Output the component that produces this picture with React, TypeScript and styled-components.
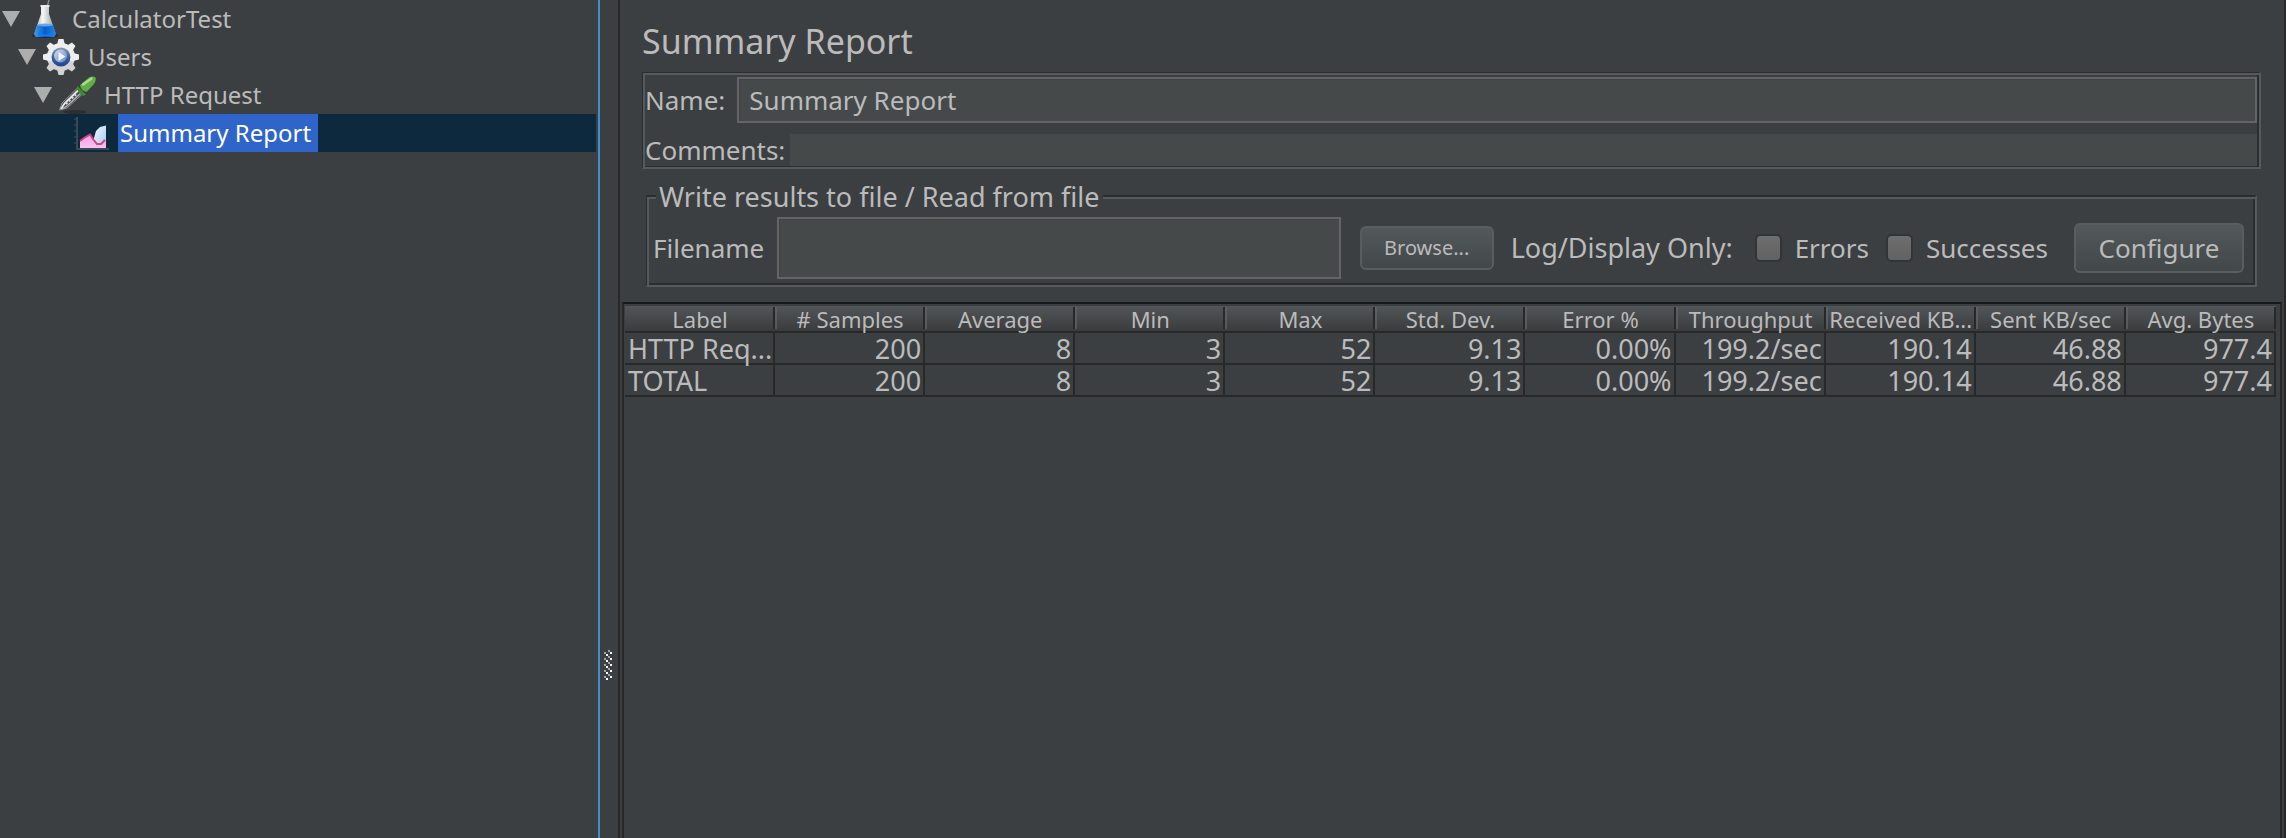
import React from 'react';
import styled, { createGlobalStyle } from 'styled-components';

const color = {
  bg: '#3c3f41',
  field: '#45494a',
  fieldBorder: '#646464',
  text: '#bbbbbb',
  etchDark: '#2b2d2f',
  etchLight: '#555a5c',
  line: '#282828',
  focus: '#3d8fd1',
};

const GlobalStyle = createGlobalStyle`
  * { box-sizing: border-box; }
  body { margin: 0; background: ${color.bg}; }
  body, input, button {
    font-family: "Noto Sans", "Liberation Sans", sans-serif;
    color: ${color.text};
  }
`;

const Window = styled.div`
  display: flex;
  min-height: 100vh;
  background: ${color.bg};
  font-size: 26px;
  line-height: 32px;
`;

const TreePane = styled.nav`
  flex: none;
  width: 600px;
  padding-right: 2px;
  border-right: 2px solid ${color.focus};
`;

const Tree = styled.ul`
  margin: 0;
  padding: 0;
  list-style: none;
`;

const TreeRow = styled.li<{ $depth: number; $selected?: boolean }>`
  display: flex;
  align-items: center;
  height: 38px;
  padding-left: ${(p) => 2 + p.$depth * 16}px;
  background: ${(p) => (p.$selected ? '#0d293e' : 'transparent')};
`;

const ArrowSlot = styled.span`
  display: flex;
  width: 24px;
`;

const TreeIcon = styled.svg`
  flex: none;
  width: 38px;
  height: 38px;
`;

const TreeLabel = styled.span<{ $selected?: boolean }>`
  margin-left: 6px;
  padding: 0 7px 0 2px;
  font-size: 24px;
  line-height: 38px;
  color: ${(p) => (p.$selected ? '#ffffff' : color.text)};
  background: ${(p) => (p.$selected ? '#2f65ca' : 'transparent')};
`;

const Splitter = styled.div`
  flex: none;
  width: 18px;
  padding: 650px 0 0 4px;
`;

const Grip = styled.svg`
  display: block;
`;

const Main = styled.main`
  flex: 1;
  min-width: 0;
  display: flex;
  flex-direction: column;
  border: solid ${color.line};
  border-width: 0 2px;
`;

const Title = styled.h1`
  margin: 21px 22px 11px;
  font-size: 34px;
  line-height: 40px;
  font-weight: 400;
`;

const NameBox = styled.section`
  display: flex;
  flex-direction: column;
  gap: 11px;
  margin: 0 23px 10px 22px;
  padding: 4px 2px 1px;
  border: solid ${color.etchDark};
  border-width: 1px 2px 2px 1px;
  border-right-color: ${color.etchLight};
  border-bottom-color: ${color.etchLight};
  box-shadow: inset 2px 2px 0 ${color.etchLight}, inset -2px -1px 0 ${color.etchDark};
`;

const FieldRow = styled.div<{ $gap: number }>`
  display: flex;
  align-items: center;
  gap: ${(p) => p.$gap}px;
`;

const TextField = styled.input<{ $height: number }>`
  flex: 1;
  min-width: 0;
  height: ${(p) => p.$height}px;
  padding: 0 10px;
  font-size: 26px;
  line-height: 32px;
  background: ${color.field};
  border: 2px solid ${color.fieldBorder};
  border-radius: 0;
  outline: none;
  box-shadow: inset 1px 1px 0 #3f4143;
`;

const PlainField = styled(TextField)`
  border: none;
  box-shadow: none;
`;

const FileBox = styled.fieldset`
  min-width: 0;
  margin: 0 27px 15px 26px;
  padding: 4px 11px 6px 6px;
  border: solid ${color.etchDark};
  border-width: 2px 2px 2px 1px;
  border-right-color: ${color.etchLight};
  border-bottom-color: ${color.etchLight};
  box-shadow: inset 2px 2px 0 ${color.etchLight}, inset -2px -2px 0 ${color.etchDark};
`;

const Legend = styled.legend`
  margin-left: 3px;
  padding: 2px 4px 0 3px;
  font-size: 27px;
  background: ${color.bg};
`;

const FileRow = styled.div`
  display: flex;
  align-items: center;
  white-space: nowrap;
`;

const FileLabel = styled.label`
  margin-right: 13px;
`;

const Button = styled.button<{ $small?: boolean }>`
  flex: none;
  height: ${(p) => (p.$small ? 44 : 50)}px;
  width: ${(p) => (p.$small ? 134 : 170)}px;
  margin-left: ${(p) => (p.$small ? 19 : 0)}px;
  padding: 0;
  font-size: ${(p) => (p.$small ? 20 : 26)}px;
  line-height: 32px;
  border: 2px solid #5a5d5e;
  border-radius: 6px;
  background: linear-gradient(#53585a, #42484a);
`;

const FilterGroup = styled.div`
  display: flex;
  align-items: center;
  padding: 0 26px 0 17px;
`;

const FilterTitle = styled.span`
  width: 244px;
  font-size: 27px;
`;

const CheckLabel = styled.label`
  display: flex;
  align-items: center;
  gap: 13px;

  & + & {
    margin-left: 17px;
  }
`;

const Check = styled.input`
  appearance: none;
  width: 27px;
  height: 28px;
  margin: 0;
  border: 2px solid #323435;
  border-radius: 5px;
  background: linear-gradient(#6e6e6e, #626262) padding-box;
`;

const TablePane = styled.section`
  flex: 1;
  margin: 0 2px;
  padding: 2px 4px 0 1px;
  border: solid ${color.line};
  border-width: 2px 2px 0;
  border-top-color: #17191a;
`;

const Table = styled.table`
  width: 100%;
  table-layout: fixed;
  border-collapse: separate;
  border-spacing: 0;
`;

const HeadCell = styled.th`
  height: 27px;
  padding: 1px 0 0;
  white-space: nowrap;
  font-size: 22px;
  line-height: 24px;
  font-weight: 400;
  text-align: center;
  border-bottom: 2px solid ${color.line};
  background:
    linear-gradient(${color.line}, ${color.line}) right 0 top 1px / 2px 22px no-repeat,
    linear-gradient(#5e6163, #55585a) left 0 top 1px / 2px 22px no-repeat,
    linear-gradient(#535658, #393b3d);

  &:first-child {
    background:
      linear-gradient(${color.line}, ${color.line}) right 0 top 1px / 2px 22px no-repeat,
      linear-gradient(#535658, #393b3d);
  }
`;

const Cell = styled.td<{ $text?: boolean }>`
  height: 32px;
  padding: ${(p) => (p.$text ? '2px 0 0 3px' : '2px 2px 0 0')};
  white-space: nowrap;
  font-size: 27px;
  line-height: 28px;
  text-align: ${(p) => (p.$text ? 'left' : 'right')};
  border: solid ${color.line};
  border-width: 0 2px 2px 0;
`;

const Arrow = () => (
  <svg width="18" height="16" viewBox="0 0 18 16" aria-hidden="true">
    <path d="M0 0H18L9 16Z" fill="#adadad" />
  </svg>
);

const FlaskIcon = () => (
  <TreeIcon viewBox="0 0 38 38" aria-hidden="true">
    <defs>
      <linearGradient id="glass" x1="0" x2="1" y1="0" y2="0">
        <stop offset="0" stopColor="#9fa4a8" />
        <stop offset=".4" stopColor="#f6f7f8" />
        <stop offset=".65" stopColor="#c9cdd0" />
        <stop offset="1" stopColor="#8b9094" />
      </linearGradient>
      <linearGradient id="liquid" x1="0" x2="1" y1="0" y2="0">
        <stop offset="0" stopColor="#3b9bf2" />
        <stop offset=".5" stopColor="#0a5cc4" />
        <stop offset="1" stopColor="#1e86ee" />
      </linearGradient>
    </defs>
    <ellipse cx="19" cy="35.500" rx="13" ry="2.500" fill="#26292b" />
    <path d="M21 7L23 0" stroke="#85898b" strokeWidth="1.500" />
    <path d="M15 6H23V14L29.500 33Q30 37 26 37H12Q8 37 8.500 33L15 14Z" fill="url(#glass)" />
    <path d="M11 25H27L29.500 33Q30 37 26 37H12Q8 37 8.500 33Z" fill="url(#liquid)" />
    <path d="M12 33Q19 36 27 33L26 36H12Z" fill="#0a7dff" />
    <ellipse cx="19" cy="25" rx="8" ry="1.500" fill="#5fa9ea" />
    <path d="M14.500 6H23.500" stroke="#e9ebec" strokeWidth="2" />
  </TreeIcon>
);

const GearIcon = () => (
  <TreeIcon viewBox="0 0 38 38" aria-hidden="true">
    <defs>
      <linearGradient id="gear" x1="0" x2="0" y1="0" y2="1">
        <stop offset="0" stopColor="#f4f4f4" />
        <stop offset="1" stopColor="#cccccc" />
      </linearGradient>
      <linearGradient id="hub" x1="0" x2="0" y1="0" y2="1">
        <stop offset="0" stopColor="#8c9cb8" />
        <stop offset=".5" stopColor="#3d619f" />
        <stop offset="1" stopColor="#1c4490" />
      </linearGradient>
      <linearGradient id="hubFace" x1="0" x2="1" y1="0" y2="1">
        <stop offset="0" stopColor="#d5deed" />
        <stop offset="1" stopColor="#5f88cc" />
      </linearGradient>
    </defs>
    <circle cx="19" cy="19" r="14" fill="url(#gear)" />
    {[0, 45, 90, 135, 180, 225, 270, 315].map((angle) => (
      <path
        key={angle}
        transform={`rotate(${angle} 19 19)`}
        d="M16.500 1H21.500L23 7V11H15V7Z"
        fill={angle > 90 && angle < 270 ? '#d2d2d2' : '#eeeeee'}
      />
    ))}
    <circle cx="19" cy="19" r="9.500" fill="url(#hub)" />
    <circle cx="18.500" cy="18" r="6.500" fill="url(#hubFace)" />
    <path d="M16.500 14L23.500 18.500L16.500 23Z" fill="#f1f4fa" />
  </TreeIcon>
);

const PipetteIcon = () => (
  <TreeIcon viewBox="0 0 38 38" aria-hidden="true">
    <ellipse cx="17" cy="36" rx="12" ry="2" fill="#2c2f30" />
    <path d="M1.500 34L4 27L19.500 12L25 17.500L9 32Z" fill="#4b4e4f" stroke="#8d9091" strokeWidth="1" />
    <path d="M3 33L6.500 27.500L20 14.500" fill="none" stroke="#e9ebeb" strokeWidth="1.800" />
    <path d="M4 33L9 30L23 17" fill="none" stroke="#b7b9b9" strokeWidth="1.200" />
    <path d="M8 28L18 18.500" stroke="#d8dada" strokeWidth="2" strokeDasharray="2 2" />
    <path d="M19 9.500L28 18.500L25.500 20Q19.500 17 19 11Z" fill="#3f8a2c" />
    <path d="M22 9L31 1.500Q35 -.5 37.500 1.500Q38.500 5 35.500 8.500L28.500 16Q23 14.500 22 9Z" fill="#62ad48" />
    <path d="M25 8.500L33.500 2.500" stroke="#a9dc92" strokeWidth="2.500" strokeLinecap="round" />
  </TreeIcon>
);

const ChartIcon = () => (
  <TreeIcon viewBox="0 0 38 38" aria-hidden="true">
    <defs>
      <linearGradient id="sky" x1="0" x2="1" y1="0" y2="1">
        <stop offset="0" stopColor="#f2f8ff" />
        <stop offset="1" stopColor="#9fc9f2" />
      </linearGradient>
      <linearGradient id="rose" x1="0" x2="0" y1="0" y2="1">
        <stop offset="0" stopColor="#f39be0" />
        <stop offset="1" stopColor="#fac3f2" />
      </linearGradient>
    </defs>
    <path d="M3 3V35H35" fill="none" stroke="#4a545d" strokeWidth="1.500" />
    <path d="M0 5H3M0 11H3M0 17H3M0 23H3M0 29H3" stroke="#3d4c58" strokeWidth="1" />
    <path d="M20 34V24L22 17L26 13L32 11.500V34Z" fill="url(#sky)" />
    <path d="M6 34V27L10 24L16 20.500L19 24L23 30L27 30L32 26V34Z" fill="url(#rose)" />
    <path d="M6 27L10 24L16 20.500L19 25L23 30L27 30L31 26" fill="none" stroke="#d04386" strokeWidth="2" />
  </TreeIcon>
);

const treeNodes = [
  { label: 'CalculatorTest', Icon: FlaskIcon, open: true },
  { label: 'Users', Icon: GearIcon, open: true },
  { label: 'HTTP Request', Icon: PipetteIcon, open: true },
  { label: 'Summary Report', Icon: ChartIcon, selected: true },
];

const columns = [
  'Label', '# Samples', 'Average', 'Min', 'Max', 'Std. Dev.', 'Error %',
  'Throughput', 'Received KB...', 'Sent KB/sec', 'Avg. Bytes',
];

const stats = ['200', '8', '3', '52', '9.13', '0.00%', '199.2/sec', '190.14', '46.88', '977.4'];
const rows = [
  ['HTTP Req...', ...stats],
  ['TOTAL', ...stats],
];

const GripDots = () => (
  <Grip width="8" height="30" viewBox="0 0 8 30" aria-hidden="true">
    {[0, 6, 12, 18, 24].map((y) => (
      <g key={y}>
        <path d={`M4 ${y}h2v2h-2zM0 ${y + 2}h2v2h-2z`} fill="#a3a3a3" />
        <path d={`M6 ${y + 2}h2v2h-2zM2 ${y + 4}h2v2h-2z`} fill="#ffffff" />
      </g>
    ))}
  </Grip>
);

export default function App() {
  return (
    <>
      <GlobalStyle />
      <Window>
        <TreePane aria-label="Test plan">
          <Tree>
            {treeNodes.map(({ label, Icon, open, selected }, depth) => (
              <TreeRow key={label} $depth={depth} $selected={selected}>
                <ArrowSlot>{open && <Arrow />}</ArrowSlot>
                <Icon />
                <TreeLabel $selected={selected}>{label}</TreeLabel>
              </TreeRow>
            ))}
          </Tree>
        </TreePane>
        <Splitter>
          <GripDots />
        </Splitter>
        <Main>
          <Title>Summary Report</Title>
          <NameBox>
            <FieldRow $gap={12}>
              <label htmlFor="name">Name:</label>
              <TextField id="name" type="text" $height={46} defaultValue="Summary Report" />
            </FieldRow>
            <FieldRow $gap={5}>
              <label htmlFor="comments">Comments:</label>
              <PlainField id="comments" type="text" $height={32} />
            </FieldRow>
          </NameBox>
          <FileBox>
            <Legend>Write results to file / Read from file</Legend>
            <FileRow>
              <FileLabel htmlFor="filename">Filename</FileLabel>
              <TextField id="filename" type="text" $height={62} />
              <Button type="button" $small>Browse...</Button>
              <FilterGroup role="group" aria-labelledby="filter-title">
                <FilterTitle id="filter-title">Log/Display Only:</FilterTitle>
                <CheckLabel>
                  <Check type="checkbox" />
                  Errors
                </CheckLabel>
                <CheckLabel>
                  <Check type="checkbox" />
                  Successes
                </CheckLabel>
              </FilterGroup>
              <Button type="button">Configure</Button>
            </FileRow>
          </FileBox>
          <TablePane>
            <Table>
              <thead>
                <tr>
                  {columns.map((name) => (
                    <HeadCell key={name} scope="col">{name}</HeadCell>
                  ))}
                </tr>
              </thead>
              <tbody>
                {rows.map((row) => (
                  <tr key={row[0]}>
                    {row.map((value, i) => (
                      <Cell key={columns[i]} $text={i === 0}>{value}</Cell>
                    ))}
                  </tr>
                ))}
              </tbody>
            </Table>
          </TablePane>
        </Main>
      </Window>
    </>
  );
}
